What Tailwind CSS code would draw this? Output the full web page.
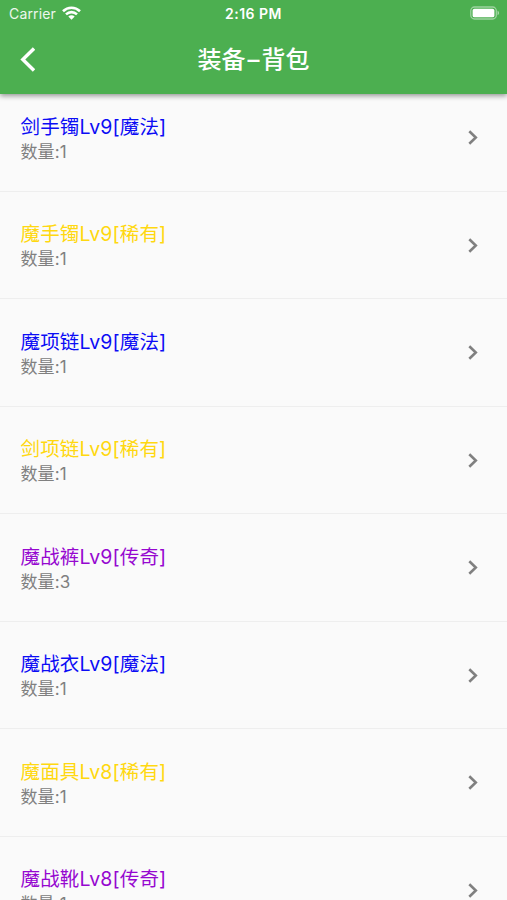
<!DOCTYPE html>
<html lang="zh-CN">
<head>
<meta charset="utf-8">
<meta name="viewport" content="width=device-width, initial-scale=1">
<title>装备–背包</title>
<script src="https://cdn.jsdelivr.net/npm/@tailwindcss/browser@4"></script>
</head>
<body class="h-[900px] overflow-hidden bg-[#fafafa] font-['Inter','Noto_Sans_CJK_SC',sans-serif]">
<div class="flex h-[900px] flex-col overflow-hidden">
  <header class="relative z-10 h-[94px] shrink-0 bg-[#4caf50] text-white shadow-[0_2px_5px_rgba(0,0,0,0.4)]">
    <div class="grid h-[27px] grid-cols-3 items-center pl-[9px] pr-[7px]">
      <div class="flex items-center gap-[6px]">
        <span class="text-[14px] leading-[27px] tracking-[0.150px] text-white/90">Carrier</span>
        <svg class="-mt-[1px] h-[14px] w-[19px]" viewBox="0 0 19 14" fill="none" stroke="#fff" stroke-width="2.600"><path d="M1 5.2C5.8.6 13.2.6 18 5.2M4 8.4c3.200-3 7.800-3 11 0"/><path d="M9.500 13.700 6.300 10.500c1.800-1.700 4.600-1.700 6.400 0z" fill="#fff" stroke="none"/></svg>
      </div>
      <span class="-ml-[2px] pt-[1px] text-center text-[14px] leading-[26px] font-semibold tracking-[0.500px]">2:16 PM</span>
      <svg class="-mt-[1px] h-[14px] w-[30px] justify-self-end" viewBox="0 0 31 14"><rect x=".8" y=".8" width="26.400" height="12.400" rx="3.800" fill="none" stroke="#fff" stroke-opacity=".45" stroke-width="1.300"/><rect x="2.700" y="2.500" width="22.500" height="9" rx="2" fill="#fff"/><path d="M28.500 4.700c2 .7 2 3.900 0 4.600z" fill="#fff" fill-opacity=".5"/></svg>
    </div>
    <div class="grid h-[65px] grid-cols-[60px_1fr_60px] items-center">
      <svg class="ml-[20px] h-[25px] w-[15px]" viewBox="0 0 15 25" fill="none" stroke="#fff" stroke-width="3.400"><path d="M14 1.500 2.800 12.500 14 23.500"/></svg>
      <h1 class="text-center text-[24px] leading-[30px] font-medium">装备<span class="px-[2px]">–</span>背包</h1>
    </div>
  </header>
  <main id="list" class="-mt-[9.700px] shrink-0"></main>
</div>
<template id="row">
  <div class="flex h-[107.500px] items-center justify-between border-b border-[#eeeeee] pl-[20.500px] pr-[29px]">
    <div class="pt-[3px]">
      <div data-title class="text-[19.500px] leading-[26px] tracking-[0.130px]"></div>
      <div data-count class="text-[17px] leading-[25px] tracking-[0.100px] text-[#808080]"></div>
    </div>
    <svg class="h-[15px] w-[10px]" viewBox="0 0 10 15" fill="none" stroke="#808080" stroke-width="2.600"><path d="M1.300 1.200 7.800 7.500 1.300 13.800"/></svg>
  </div>
</template>
<script>
const items = [
  ['剑手镯Lv9[魔法]', 1, 'text-[#0c0cf5]'],
  ['魔手镯Lv9[稀有]', 1, 'text-[#ffd810]'],
  ['魔项链Lv9[魔法]', 1, 'text-[#0c0cf5]'],
  ['剑项链Lv9[稀有]', 1, 'text-[#ffd810]'],
  ['魔战裤Lv9[传奇]', 3, 'text-[#9608d0]'],
  ['魔战衣Lv9[魔法]', 1, 'text-[#0c0cf5]'],
  ['魔面具Lv8[稀有]', 1, 'text-[#ffd810]'],
  ['魔战靴Lv8[传奇]', 1, 'text-[#9608d0]']
];
const list = document.getElementById('list');
const row = document.getElementById('row');
for (const [name, count, color] of items) {
  const node = row.content.cloneNode(true);
  const title = node.querySelector('[data-title]');
  title.textContent = name;
  title.classList.add(color);
  node.querySelector('[data-count]').textContent = '数量:' + count;
  list.append(node);
}
</script>
</body>
</html>
